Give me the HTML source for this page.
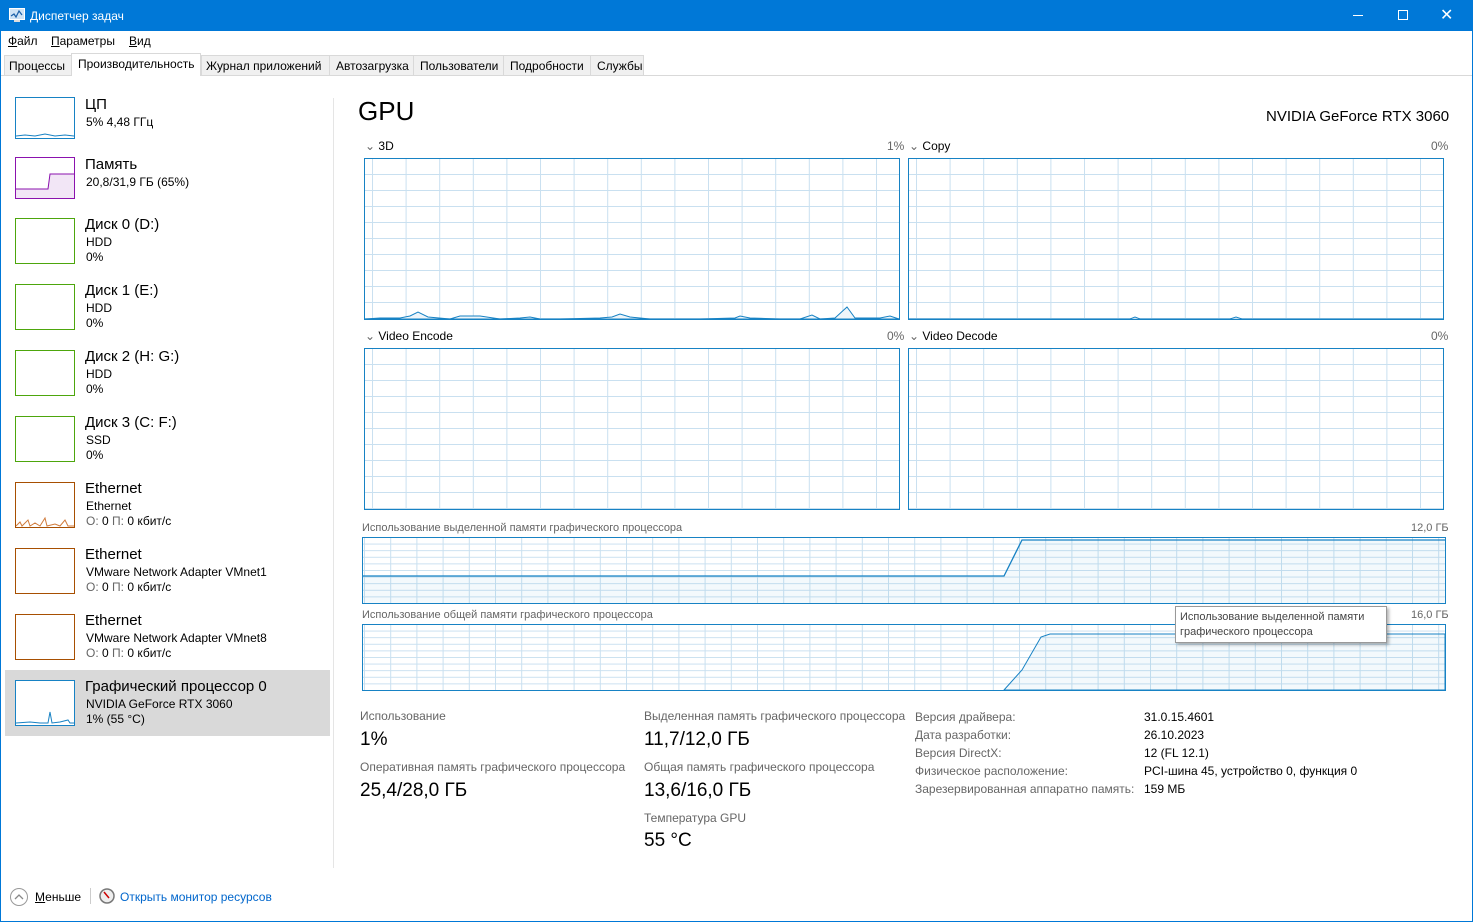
<!DOCTYPE html>
<html><head><meta charset="utf-8"><style>
*{margin:0;padding:0;box-sizing:border-box}
body{width:1473px;height:922px;position:relative;overflow:hidden;background:#fff;font-family:"Liberation Sans",sans-serif;color:#000}
.a{position:absolute;white-space:nowrap}
.t{font-size:12px}
.g{color:#666}
u{text-decoration:underline}
</style></head><body>
<div class="a" style="left:0;top:0;width:1473px;height:922px;border:1px solid #0078d7;border-top:none"></div>
<div class="a" style="left:0;top:0;width:1473px;height:31px;background:#0078d7;color:#fff">
 <svg class="a" style="left:9px;top:8px" width="16" height="15"><rect x="0.5" y="0.5" width="15" height="11" fill="#cfe3f5" stroke="#fff"/><polyline points="2,8 5,6 7,9 10,3 13,7" fill="none" stroke="#1a5fa8" stroke-width="1.2"/><rect x="5" y="12" width="6" height="2" fill="#ddd"/></svg>
 <div class="a t" style="left:30px;top:9px">Диспетчер задач</div>
 <div class="a" style="left:1353px;top:15px;width:10px;height:1px;background:#fff"></div>
 <div class="a" style="left:1398px;top:10px;width:10px;height:10px;border:1px solid #fff"></div>
 <div class="a" style="left:1440px;top:5px;font-size:16px">✕</div>
</div>
<div class="a t" style="left:8px;top:34px"><u>Ф</u>айл</div>
<div class="a t" style="left:51px;top:34px"><u>П</u>араметры</div>
<div class="a t" style="left:129px;top:34px"><u>В</u>ид</div>
<div class="a" style="left:1px;top:75px;width:1471px;height:1px;background:#d9d9d9"></div>
<div class="a" style="left:4px;top:55px;width:640px;height:21px;background:#f0f0f0;border:1px solid #d9d9d9"></div>
<div class="a" style="left:71px;top:53px;width:130px;height:23px;background:#fff;border:1px solid #d9d9d9;border-bottom:none"></div>
<div class="a t" style="left:9px;top:59px">Процессы</div>
<div class="a t" style="left:78px;top:57px">Производительность</div>
<div class="a" style="left:201px;top:55px;width:1px;height:20px;background:#d9d9d9"></div>
<div class="a t" style="left:206px;top:59px">Журнал приложений</div>
<div class="a" style="left:329px;top:55px;width:1px;height:20px;background:#d9d9d9"></div>
<div class="a t" style="left:336px;top:59px">Автозагрузка</div>
<div class="a" style="left:413px;top:55px;width:1px;height:20px;background:#d9d9d9"></div>
<div class="a t" style="left:420px;top:59px">Пользователи</div>
<div class="a" style="left:503px;top:55px;width:1px;height:20px;background:#d9d9d9"></div>
<div class="a t" style="left:510px;top:59px">Подробности</div>
<div class="a" style="left:590px;top:55px;width:1px;height:20px;background:#d9d9d9"></div>
<div class="a t" style="left:597px;top:59px">Службы</div>

<div class="a" style="left:333px;top:98px;width:1px;height:770px;background:#e5e5e5"></div>
<div class="a" style="left:5px;top:670px;width:325px;height:66px;background:#d9d9d9"></div>

<svg class="a" style="left:0;top:0" width="340" height="740">
 <g fill="#fff" stroke-width="1">
 <rect x="15.5" y="97.5" width="59" height="41" stroke="#1782c4"/>
 <polyline points="16,136 25,135 35,136 45,134 55,136 65,135 74,136" fill="none" stroke="#1782c4"/>
 <rect x="15.5" y="157.5" width="59" height="41" stroke="#8b12ae"/>
 <polygon points="16,189 48,189 50,174 74,174 74,198 16,198" fill="#f2e6f6"/>
 <polyline points="16,189 48,189 50,174 74,174" fill="none" stroke="#8b12ae"/>
 <rect x="15.5" y="218.5" width="59" height="45" stroke="#4da60c"/>
 <rect x="15.5" y="284.5" width="59" height="45" stroke="#4da60c"/>
 <rect x="15.5" y="350.5" width="59" height="45" stroke="#4da60c"/>
 <rect x="15.5" y="416.5" width="59" height="45" stroke="#4da60c"/>
 <rect x="15.5" y="482.5" width="59" height="45" stroke="#a74f01"/>
 <polyline points="16,526 20,522 22,526 28,520 30,526 35,523 40,526 45,518 47,526 55,524 60,526 65,520 68,526 74,526" fill="none" stroke="#d07a3a"/>
 <rect x="15.5" y="548.5" width="59" height="45" stroke="#a74f01"/>
 <rect x="15.5" y="614.5" width="59" height="45" stroke="#a74f01"/>
 <rect x="15.5" y="680.5" width="59" height="45" stroke="#1782c4"/>
 <polyline points="16,723 30,722 40,723 48,723 50,712 52,723 60,722 68,720 70,723 74,723" fill="none" stroke="#1782c4"/>
 </g>
</svg>
<div class="a" style="left:85px;top:96px;font-size:15px">ЦП</div>
<div class="a t" style="left:86px;top:115px">5% 4,48 ГГц</div>
<div class="a" style="left:85px;top:156px;font-size:15px">Память</div>
<div class="a t" style="left:86px;top:175px">20,8/31,9 ГБ (65%)</div>
<div class="a" style="left:85px;top:216px;font-size:15px">Диск 0 (D:)</div>
<div class="a t" style="left:86px;top:235px">HDD</div><div class="a t" style="left:86px;top:250px">0%</div>
<div class="a" style="left:85px;top:282px;font-size:15px">Диск 1 (E:)</div>
<div class="a t" style="left:86px;top:301px">HDD</div><div class="a t" style="left:86px;top:316px">0%</div>
<div class="a" style="left:85px;top:348px;font-size:15px">Диск 2 (H: G:)</div>
<div class="a t" style="left:86px;top:367px">HDD</div><div class="a t" style="left:86px;top:382px">0%</div>
<div class="a" style="left:85px;top:414px;font-size:15px">Диск 3 (C: F:)</div>
<div class="a t" style="left:86px;top:433px">SSD</div><div class="a t" style="left:86px;top:448px">0%</div>
<div class="a" style="left:85px;top:480px;font-size:15px">Ethernet</div>
<div class="a t" style="left:86px;top:499px">Ethernet</div><div class="a t" style="left:86px;top:514px"><span class="g">О:</span> 0 <span class="g">П:</span> 0 кбит/с</div>
<div class="a" style="left:85px;top:546px;font-size:15px">Ethernet</div>
<div class="a t" style="left:86px;top:565px">VMware Network Adapter VMnet1</div><div class="a t" style="left:86px;top:580px"><span class="g">О:</span> 0 <span class="g">П:</span> 0 кбит/с</div>
<div class="a" style="left:85px;top:612px;font-size:15px">Ethernet</div>
<div class="a t" style="left:86px;top:631px">VMware Network Adapter VMnet8</div><div class="a t" style="left:86px;top:646px"><span class="g">О:</span> 0 <span class="g">П:</span> 0 кбит/с</div>
<div class="a" style="left:85px;top:678px;font-size:15px">Графический процессор 0</div>
<div class="a t" style="left:86px;top:697px">NVIDIA GeForce RTX 3060</div><div class="a t" style="left:86px;top:712px">1% (55 °C)</div>

<div class="a" style="left:358px;top:96px;font-size:26px">GPU</div>
<div class="a" style="left:1266px;top:108px;font-size:15px">NVIDIA GeForce RTX 3060</div>
<div class="a t" style="left:365px;top:139px"><span class="g">⌄</span> 3D</div>
<div class="a t g" style="left:887px;top:139px">1%</div>
<div class="a t" style="left:909px;top:139px"><span class="g">⌄</span> Copy</div>
<div class="a t g" style="left:1431px;top:139px">0%</div>
<div class="a t" style="left:365px;top:329px"><span class="g">⌄</span> Video Encode</div>
<div class="a t g" style="left:887px;top:329px">0%</div>
<div class="a t" style="left:909px;top:329px"><span class="g">⌄</span> Video Decode</div>
<div class="a t g" style="left:1431px;top:329px">0%</div>
<div class="a g" style="left:362px;top:522px;font-size:11px">Использование выделенной памяти графического процессора</div>
<div class="a g" style="left:1411px;top:522px;font-size:11px">12,0 ГБ</div>
<div class="a g" style="left:362px;top:609px;font-size:11px">Использование общей памяти графического процессора</div>
<div class="a g" style="left:1411px;top:609px;font-size:11px">16,0 ГБ</div>

<svg class="a" style="left:0;top:0" width="1473" height="720">
 <defs>
  <pattern id="p1" patternUnits="userSpaceOnUse" x="372" y="158" width="33.6" height="16"><path d="M0.5,0V16M0,0.5H33.6" stroke="#c9e0f0" fill="none" stroke-width="1"/></pattern>
  <pattern id="p2" patternUnits="userSpaceOnUse" x="916" y="158" width="33.6" height="16"><path d="M0.5,0V16M0,0.5H33.6" stroke="#c9e0f0" fill="none"/></pattern>
  <pattern id="p3" patternUnits="userSpaceOnUse" x="372" y="348" width="33.6" height="16"><path d="M0.5,0V16M0,0.5H33.6" stroke="#c9e0f0" fill="none"/></pattern>
  <pattern id="p4" patternUnits="userSpaceOnUse" x="916" y="348" width="33.6" height="16"><path d="M0.5,0V16M0,0.5H33.6" stroke="#c9e0f0" fill="none"/></pattern>
  <pattern id="pm" patternUnits="userSpaceOnUse" x="364" y="537" width="26.2" height="6.6"><path d="M0.5,0V6.6M0,0.5H26.2" stroke="#c9e0f0" fill="none"/></pattern>
  <pattern id="ps" patternUnits="userSpaceOnUse" x="364" y="624" width="26.2" height="6.6"><path d="M0.5,0V6.6M0,0.5H26.2" stroke="#c9e0f0" fill="none"/></pattern>
 </defs>
 <rect x="364.5" y="158.5" width="535" height="161" fill="url(#p1)" stroke="#1782c4"/>
 <polygon points="365,319 380,318 400,318 410,316 418,312 428,317 450,319 460,316 480,316 500,319 520,318 530,317 540,319 560,319 600,318 612,317 620,314 630,317 650,319 700,319 735,318 740,316 750,318 780,319 800,319 812,315 820,319 835,318 847,307 855,318 880,318 890,316 899,319" fill="#eef5fa" stroke="#1782c4"/>
 <rect x="908.5" y="158.5" width="535" height="161" fill="url(#p2)" stroke="#1782c4"/>
 <polyline points="909,319 1130,319 1135,317 1140,319 1230,319 1236,317 1242,319 1443,319" fill="none" stroke="#1782c4"/>
 <rect x="364.5" y="348.5" width="535" height="161" fill="url(#p3)" stroke="#1782c4"/>
 <rect x="908.5" y="348.5" width="535" height="161" fill="url(#p4)" stroke="#1782c4"/>
 <rect x="362.5" y="537.5" width="1083" height="66" fill="url(#pm)" stroke="#1782c4"/>
 <polygon points="363,576 1004,576 1022,540 1445,540 1445,603 363,603" fill="#1782c4" fill-opacity="0.05" stroke="none"/>
 <polyline points="363,576 1004,576 1022,540 1445,540" fill="none" stroke="#1782c4" stroke-width="1.3"/>
 <rect x="362.5" y="624.5" width="1083" height="66" fill="url(#ps)" stroke="#1782c4"/>
 <polygon points="1004,690 1022,670 1041,637 1050,634 1445,634 1445,690" fill="#1782c4" fill-opacity="0.05" stroke="#1782c4"/>
</svg>
<div class="a" style="left:1175px;top:606px;width:212px;height:37px;background:#fff;border:1px solid #999;box-shadow:2px 2px 3px rgba(0,0,0,.3)"></div>
<div class="a" style="left:1180px;top:610px;font-size:11px;color:#444;line-height:15px">Использование выделенной памяти<br>графического процессора</div>

<div class="a t g" style="left:360px;top:709px">Использование</div>
<div class="a" style="left:360px;top:729px;font-size:19px">1%</div>
<div class="a t g" style="left:360px;top:760px">Оперативная память графического процессора</div>
<div class="a" style="left:360px;top:780px;font-size:19px">25,4/28,0 ГБ</div>
<div class="a t g" style="left:644px;top:709px">Выделенная память графического процессора</div>
<div class="a" style="left:644px;top:729px;font-size:19px">11,7/12,0 ГБ</div>
<div class="a t g" style="left:644px;top:760px">Общая память графического процессора</div>
<div class="a" style="left:644px;top:780px;font-size:19px">13,6/16,0 ГБ</div>
<div class="a t g" style="left:644px;top:811px">Температура GPU</div>
<div class="a" style="left:644px;top:830px;font-size:19px">55 °C</div>
<div class="a g" style="left:915px;top:708px;font-size:12px;line-height:18px">Версия драйвера:<br>Дата разработки:<br>Версия DirectX:<br>Физическое расположение:<br>Зарезервированная аппаратно память:</div>
<div class="a" style="left:1144px;top:708px;font-size:12px;line-height:18px">31.0.15.4601<br>26.10.2023<br>12 (FL 12.1)<br>PCI-шина 45, устройство 0, функция 0<br>159 МБ</div>

<svg class="a" style="left:9px;top:887px" width="20" height="20"><circle cx="10" cy="10" r="8.5" fill="#fff" stroke="#999"/><polyline points="6,12 10,8 14,12" fill="none" stroke="#888" stroke-width="1.3"/></svg>
<div class="a t" style="left:35px;top:890px"><u>М</u>еньше</div>
<div class="a" style="left:90px;top:888px;width:1px;height:16px;background:#ccc"></div>
<svg class="a" style="left:99px;top:888px" width="16" height="16"><circle cx="8" cy="8" r="7" fill="#eee" stroke="#777" stroke-width="1.5"/><line x1="5" y1="4" x2="10" y2="10" stroke="#c00" stroke-width="1.5"/></svg>
<div class="a t" style="left:120px;top:890px;color:#0066cc">Открыть монитор ресурсов</div>
</body></html>
